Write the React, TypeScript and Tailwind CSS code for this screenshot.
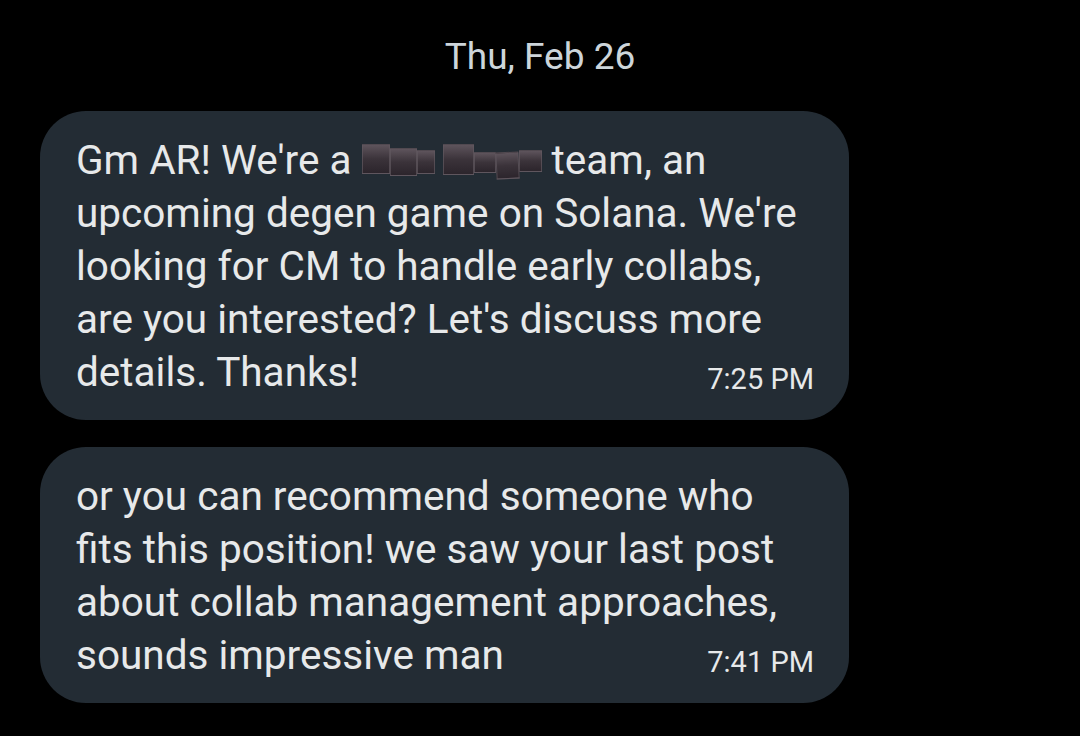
import React from "react";

// Redaction blocks that cover a name in the first message
function Redacted({ pieces }: { pieces: { w: number; h: number; dy: number; rot?: number }[] }) {
  return (
    <span className="inline-flex items-start align-top mt-[10px]">
      {pieces.map((p, i) => (
        <span
          key={i}
          className="inline-block border border-[#615860]/70 bg-gradient-to-b from-[#5e545c] via-[#3b333a] to-[#2c252c]"
          style={{ width: p.w, height: p.h, marginTop: p.dy, transform: p.rot ? `rotate(${p.rot}deg)` : undefined }}
        />
      ))}
    </span>
  );
}

function Bubble({ lines, last, time }: { lines: React.ReactNode[]; last: string; time: string }) {
  return (
    <div className="w-[809px] rounded-[46px] bg-[#232c34] pl-[36px] pr-[35px] pt-[23px] pb-[21px] text-[40.5px] leading-[53px] text-[#e7e9ea] font-['Roboto',sans-serif]">
      {lines.map((l, i) => (
        <div key={i} className="whitespace-nowrap">
          {l}
        </div>
      ))}
      <div className="flex items-baseline justify-between whitespace-nowrap">
        <span>{last}</span>
        <span className="text-[29px] leading-[29px] text-[#e7e9ea] relative top-[3px]">{time}</span>
      </div>
    </div>
  );
}

export default function App() {
  return (
    <div className="w-[1080px] h-[736px] bg-black overflow-hidden font-['Roboto',sans-serif]">
      <div className="pt-[35px] text-center text-[37px] leading-[44px] text-[#cdd5da]">Thu, Feb 26</div>
      <div className="mt-[32px] pl-[40px] flex flex-col gap-[27px]">
        <Bubble
          lines={[
            <>
              Gm AR! We're a{" "}
              <Redacted
                pieces={[
                  { w: 28, h: 30, dy: 0 },
                  { w: 27, h: 28, dy: 4 },
                  { w: 18, h: 24, dy: 6 },
                ]}
              />
              <span className="inline-block w-[8px]" />
              <Redacted
                pieces={[
                  { w: 31, h: 31, dy: 0 },
                  { w: 22, h: 21, dy: 8 },
                  { w: 23, h: 27, dy: 8, rot: -3 },
                  { w: 23, h: 22, dy: 6 },
                ]}
              />{" "}
              team, an
            </>,
            "upcoming degen game on Solana. We're",
            "looking for CM to handle early collabs,",
            "are you interested? Let's discuss more",
          ]}
          last="details. Thanks!"
          time="7:25 PM"
        />
        <Bubble
          lines={[
            "or you can recommend someone who",
            "fits this position! we saw your last post",
            "about collab management approaches,",
          ]}
          last="sounds impressive man"
          time="7:41 PM"
        />
      </div>
    </div>
  );
}
